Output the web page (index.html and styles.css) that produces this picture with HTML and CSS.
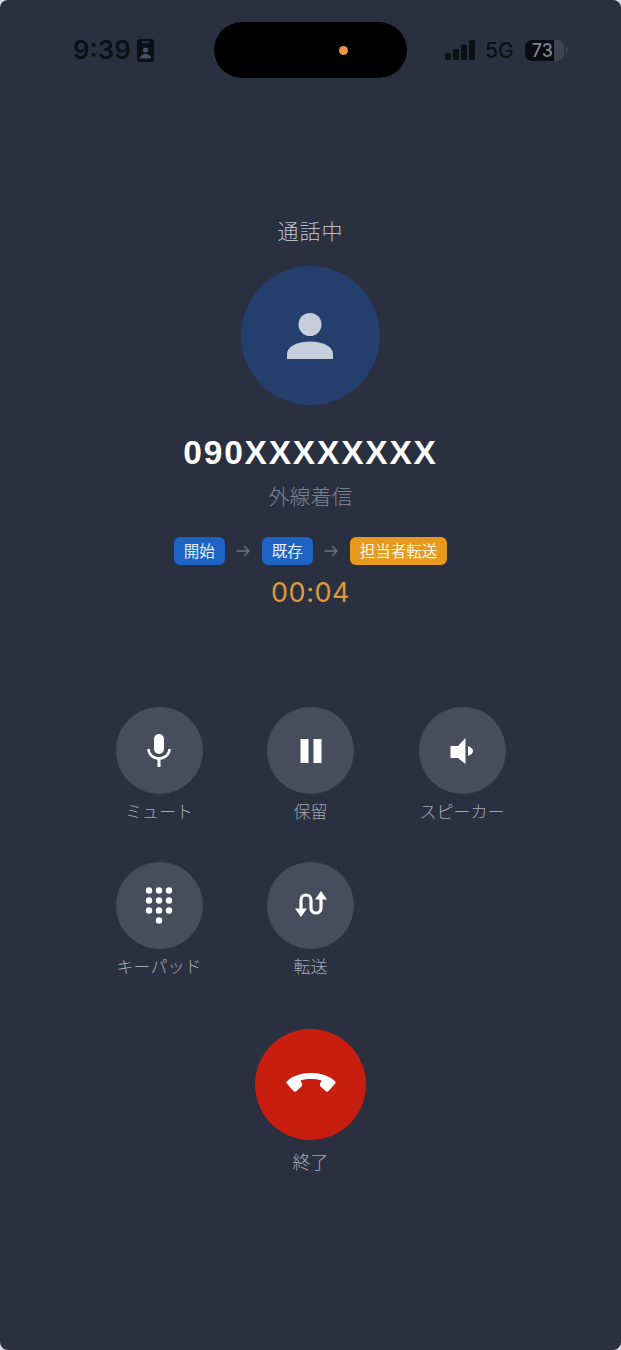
FILE: index.html
```html
<!DOCTYPE html>
<html lang="ja">
<head>
<meta charset="utf-8">
<title>通話中</title>
<link rel="stylesheet" href="styles.css">
</head>
<body>
<main class="phone">
  <header class="status">
    <div class="status-left">
      <span class="time">9:39</span>
      <svg class="id-icon" width="17" height="23" viewBox="0 0 17 23"><rect width="17" height="23" rx="2.500" fill="#0c0f16"/><rect x="5" y="2.500" width="7" height="1.400" fill="#3a4050"/><circle cx="8.500" cy="11" r="2.600" fill="#4a5060"/><path d="M3 19.500c0-3 2.500-4.600 5.500-4.600s5.500 1.600 5.500 4.600z" fill="#4a5060"/></svg>
    </div>
    <div class="island"><span class="island-dot"></span></div>
    <div class="status-right">
      <svg class="signal" width="30" height="20" viewBox="0 0 30 20"><rect x="0" y="13" width="6" height="7" rx="2" fill="#0c0f16"/><rect x="8" y="9" width="6" height="11" rx="1.500" fill="#0c0f16"/><rect x="16" y="4.500" width="6" height="15.500" rx="1.500" fill="#0c0f16"/><rect x="24" y="0" width="6" height="20" rx="1.500" fill="#0c0f16"/></svg>
      <span class="net">5G</span>
      <span class="battery"><span class="battery-fill"></span><span class="battery-num">73</span></span>
      <span class="battery-cap"></span>
    </div>
  </header>

  <section class="caller">
    <p class="state">通話中</p>
    <div class="avatar">
      <svg width="46" height="46" viewBox="0 0 46 46"><circle cx="23" cy="11.500" r="11.500" fill="#c6cedb"/><path d="M0 46v-5C0 33.500 10 28.500 23 28.500S46 33.500 46 41V46z" fill="#c6cedb"/></svg>
    </div>
    <h1 class="number">090XXXXXXXX</h1>
    <p class="source">外線着信</p>
    <div class="flow">
      <span class="chip chip-blue">開始</span>
      <svg class="arrow" width="14" height="12" viewBox="0 0 14 12"><path d="M0.500 6H13M8 1l5 5-5 5" fill="none" stroke="#6c7280" stroke-width="1.300"/></svg>
      <span class="chip chip-blue">既存</span>
      <svg class="arrow" width="14" height="12" viewBox="0 0 14 12"><path d="M0.500 6H13M8 1l5 5-5 5" fill="none" stroke="#6c7280" stroke-width="1.300"/></svg>
      <span class="chip chip-orange">担当者転送</span>
    </div>
    <p class="timer">00:04</p>
  </section>

  <section class="controls">
    <div class="control">
      <span class="circle">
        <svg width="26" height="34" viewBox="0 0 26 34"><rect x="8" y="0" width="10" height="20" rx="5" fill="#fff"/><path d="M2.500 15a10.500 9.500 0 0 0 21 0" fill="none" stroke="#fff" stroke-width="2.600"/><rect x="11.500" y="24" width="3" height="9" fill="#fff"/></svg>
      </span>
      <span class="label">ミュート</span>
    </div>
    <div class="control">
      <span class="circle">
        <svg width="22" height="24" viewBox="0 0 22 24"><rect x="0.500" width="8" height="24" fill="#fff"/><rect x="13.500" width="8" height="24" fill="#fff"/></svg>
      </span>
      <span class="label">保留</span>
    </div>
    <div class="control">
      <span class="circle">
        <svg width="24" height="26" viewBox="0 0 24 26"><path d="M0.500 8H8L15.500 0V26L8 20H0.500z" fill="#fff"/><path d="M18 8c3 1 5 3 5 5s-2 4-5 5z" fill="#fff"/></svg>
      </span>
      <span class="label">スピーカー</span>
    </div>
    <div class="control">
      <span class="circle">
        <svg width="28" height="38" viewBox="0 0 28 38"><g fill="#fff"><circle cx="4" cy="3.500" r="3.200"/><circle cx="14" cy="3.500" r="3.200"/><circle cx="24" cy="3.500" r="3.200"/><circle cx="4" cy="13.500" r="3.200"/><circle cx="14" cy="13.500" r="3.200"/><circle cx="24" cy="13.500" r="3.200"/><circle cx="4" cy="23.500" r="3.200"/><circle cx="14" cy="23.500" r="3.200"/><circle cx="24" cy="23.500" r="3.200"/><circle cx="14" cy="33.500" r="3.200"/></g></svg>
      </span>
      <span class="label">キーパッド</span>
    </div>
    <div class="control">
      <span class="circle">
        <svg width="32" height="30" viewBox="0 0 32 30"><path d="M6 18V9a5 5 0 0 1 10 0v8a5 5 0 0 0 10 0V8" fill="none" stroke="#fff" stroke-width="3.200"/><path d="M0 17.500h12L6 26zM20 8.500h12L26 0z" fill="#fff"/></svg>
      </span>
      <span class="label">転送</span>
    </div>
  </section>

  <section class="end">
    <span class="end-circle">
      <svg width="50" height="23" viewBox="0 0 50 23"><path d="M25 0C15 0 6 3 .8 8.500c-.6.700-.6 1.500 0 2.100l6.200 7c1 1.200 2.500 1.400 3.500.4l5-4.500c.7-.7.800-1.500.5-2.500l-1.500-3.500C18 6.300 21 6 25 6s7 .3 10.500 1.500L34 11c-.3 1-.2 1.800.5 2.500l5 4.500c1 1 2.500.8 3.500-.4l6.200-7c.6-.6.600-1.400 0-2.100C44 3 35 0 25 0z" fill="#fff"/></svg>
    </span>
    <span class="end-label">終了</span>
  </section>
</main>
</body>
</html>
```

FILE: styles.css
```css
* { box-sizing: border-box; }
html, body { margin: 0; padding: 0; }
body {
  width: 621px;
  height: 1350px;
  overflow: hidden;
  background: #d9dbe0;
  font-family: "Noto Sans CJK JP", "Noto Sans", sans-serif;
}
p, h1 { margin: 0; }

.phone {
  width: 621px;
  height: 1350px;
  border-radius: 8px;
  background: #2a3040;
  display: flex;
  flex-direction: column;
  align-items: center;
}

/* status bar */
.status {
  width: 100%;
  padding-top: 22px;
  display: grid;
  grid-template-columns: 214px 193px 214px;
  height: 78px;
}
.status-left {
  display: flex;
  align-items: center;
  justify-content: flex-end;
  gap: 6px;
  padding-right: 60px;
  height: 56px;
  filter: blur(0.3px);
}
.time {
  font: 600 26px/1 Inter, "Liberation Sans", sans-serif;
  margin-left: -2px;
  color: #0c0f16;
}
.island {
  height: 56px;
  border-radius: 28px;
  background: #000;
  position: relative;
}
.island-dot {
  position: absolute;
  left: 125px;
  top: 23.500px;
  width: 9px;
  height: 9px;
  border-radius: 50%;
  background: #f2913f;
}
.status-right {
  display: flex;
  align-items: center;
  height: 56px;
  padding-left: 38px;
  filter: blur(0.3px);
}
.net {
  margin-left: 10px;
  font: 500 21px/1 Inter, "Liberation Sans", sans-serif;
  color: #0c0f16;
}
.battery {
  margin-left: 11px;
  width: 39px;
  height: 21px;
  border-radius: 7px;
  background: #3e4452;
  position: relative;
  overflow: hidden;
  display: block;
}
.battery-fill {
  position: absolute;
  inset: 0 10px 0 0;
  background: #0a0c12;
}
.battery-num {
  position: absolute;
  left: 7px;
  top: 0;
  font: 500 18px/21px Inter, "Liberation Sans", sans-serif;
  color: #80858f;
}
.battery-cap {
  margin-left: 2px;
  width: 2px;
  height: 6px;
  border-radius: 0 2px 2px 0;
  background: #3e4452;
}

/* caller */
.caller {
  margin-top: 134px;
  display: flex;
  flex-direction: column;
  align-items: center;
}
.state {
  font-size: 21px;
  font-weight: 300;
  line-height: 36px;
  letter-spacing: 1px;
  color: #b8bec9;
}
.avatar {
  margin-top: 18px;
  width: 139px;
  height: 139px;
  border-radius: 50%;
  background: #243f6d;
  display: flex;
  align-items: center;
  justify-content: center;
}
.number {
  margin-top: 26px;
  font: 700 33.500px/44px "Liberation Sans", Inter, sans-serif;
  letter-spacing: 1.800px;
  color: #fff;
}
.source {
  margin-top: 2px;
  font-size: 21px;
  font-weight: 300;
  line-height: 36px;
  color: #7c8290;
}
.flow {
  margin-top: 24px;
  display: flex;
  align-items: center;
  gap: 11.500px;
}
.chip {
  height: 28px;
  padding: 0 10px;
  border-radius: 6px;
  font-size: 15.500px;
  line-height: 27px;
  color: #e6edf8;
  display: block;
}
.chip-blue { background: #1d64c4; }
.chip-orange { background: #e89a1c; color: #fdf4e2; }
.timer {
  margin-top: 8px;
  font: 400 27px/40px Inter, "Liberation Sans", sans-serif;
  letter-spacing: 0.500px;
  color: #dc9a3a;
}

/* controls */
.controls {
  margin-top: 94px;
  display: grid;
  grid-template-columns: repeat(3, 87px);
  column-gap: 64.500px;
  row-gap: 39px;
}
.control {
  display: flex;
  flex-direction: column;
  align-items: center;
}
.circle {
  width: 87px;
  height: 87px;
  border-radius: 50%;
  background: #474d5d;
  display: flex;
  align-items: center;
  justify-content: center;
}
.label {
  margin-top: 5px;
  font-size: 17px;
  font-weight: 300;
  line-height: 24px;
  white-space: nowrap;
  color: #a3a9b4;
}

/* end call */
.end {
  margin-top: 51px;
  display: flex;
  flex-direction: column;
  align-items: center;
}
.end-circle {
  width: 111px;
  height: 111px;
  border-radius: 50%;
  background: #c81e10;
  display: flex;
  align-items: center;
  justify-content: center;
}
.end-label {
  margin-top: 7px;
  font-size: 18px;
  font-weight: 300;
  line-height: 28px;
  color: #a3a9b4;
}
```
